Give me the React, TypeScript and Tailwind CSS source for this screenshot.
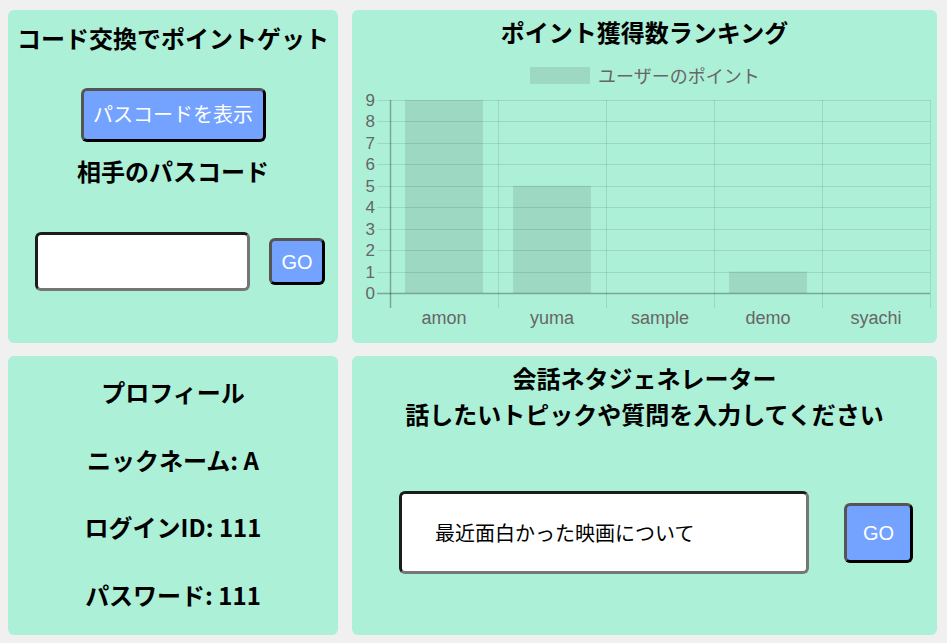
import React from "react"

const jp = "font-['Noto_Sans_CJK_JP',sans-serif]"
const btn =
  "bg-[#74a2ff] text-white border-[3px] border-t-[#555] border-l-[#555] border-b-black border-r-black rounded-[6px] font-['Liberation_Sans','Noto_Sans_CJK_JP',sans-serif]"
const field =
  "bg-white border-[3px] border-t-[#1c1c1c] border-l-[#1c1c1c] border-b-[#767676] border-r-[#767676] rounded-[6px]"

const ranking = [
  { name: "amon", points: 9 },
  { name: "yuma", points: 5 },
  { name: "sample", points: 0 },
  { name: "demo", points: 1 },
  { name: "syachi", points: 0 },
]

// chart drawn in page coordinates via viewBox
function RankingChart() {
  const left = 390
  const right = 930
  const zeroY = 293
  const topY = 100
  const step = (zeroY - topY) / 9
  const slot = (right - left) / ranking.length
  const barW = slot * 0.72

  return (
    <svg className="block" width={585} height={290} viewBox="352 48 585 290">
      {/* legend */}
      <rect x={530} y={67} width={60} height={17} fill="#9dd8c3" />
      <text
        x={598}
        y={74.5}
        dominantBaseline="central"
        fontSize={18}
        fill="#666"
        fontFamily="'Noto Sans CJK JP', sans-serif"
      >
        ユーザーのポイント
      </text>

      {/* bars */}
      {ranking.map((r, i) => {
        const cx = left + slot * (i + 0.5)
        const h = r.points * step
        return r.points > 0 ? (
          <rect key={r.name} x={cx - barW / 2} y={zeroY - h} width={barW} height={h} fill="#9dd8c3" />
        ) : null
      })}

      {/* horizontal grid */}
      {Array.from({ length: 10 }, (_, k) => {
        const y = Math.round(zeroY - k * step) + 0.5
        return (
          <g key={k}>
            <line
              x1={377}
              x2={right}
              y1={y}
              y2={y}
              stroke={k === 0 ? "rgba(0,0,0,0.3)" : "rgba(0,0,0,0.1)"}
              strokeWidth={k === 0 ? 1.5 : 1}
            />
            <text
              x={375}
              y={y}
              textAnchor="end"
              dominantBaseline="central"
              fontSize={17}
              fill="#666"
              fontFamily="'Liberation Sans', sans-serif"
            >
              {k}
            </text>
          </g>
        )
      })}

      {/* vertical grid */}
      {Array.from({ length: ranking.length + 1 }, (_, i) => {
        const x = Math.round(left + slot * i) + 0.5
        return (
          <line
            key={i}
            x1={x}
            x2={x}
            y1={topY}
            y2={308}
            stroke={i === 0 ? "rgba(0,0,0,0.3)" : "rgba(0,0,0,0.1)"}
            strokeWidth={i === 0 ? 1.5 : 1}
          />
        )
      })}

      {/* category labels */}
      {ranking.map((r, i) => (
        <text
          key={r.name}
          x={left + slot * (i + 0.5)}
          y={318}
          textAnchor="middle"
          dominantBaseline="central"
          fontSize={18}
          fill="#666"
          fontFamily="'Liberation Sans', sans-serif"
        >
          {r.name}
        </text>
      ))}
    </svg>
  )
}

export default function App() {
  return (
    <div className={`min-h-[643px] w-[947px] bg-[#f0f0f0] pt-[10px] pl-[8px] ${jp}`}>
      <div className="grid grid-cols-[330px_585px] grid-rows-[333px_279px] gap-x-[14px] gap-y-[13px]">
        {/* code exchange */}
        <div className="bg-[#adf0d8] rounded-[6px] flex flex-col items-center pt-[12px]">
          <h2 className="text-[24px] leading-[32px] font-bold text-black">コード交換でポイントゲット</h2>
          <button className={`${btn} mt-[34px] w-[185px] h-[54px] text-[20px] leading-none`}>パスコードを表示</button>
          <h2 className="mt-[13px] text-[24px] leading-[32px] font-bold text-black">相手のパスコード</h2>
          <div className="self-start flex items-center pl-[27px] mt-[45px]">
            <div className={`${field} w-[215px] h-[59px]`} />
            <button className={`${btn} ml-[19px] w-[56px] h-[47px] text-[20px] leading-none`}>GO</button>
          </div>
        </div>

        {/* ranking chart */}
        <div className="bg-[#adf0d8] rounded-[6px] flex flex-col items-center pt-[6px]">
          <h2 className="text-[24px] leading-[32px] font-bold text-black">ポイント獲得数ランキング</h2>
          <RankingChart />
        </div>

        {/* profile */}
        <div className="bg-[#adf0d8] rounded-[6px] flex flex-col items-center pt-[20px] text-black font-bold">
          <h2 className="text-[24px] leading-[32px]">プロフィール</h2>
          <p className="mt-[36px] text-[24px] leading-[32px]">ニックネーム: A</p>
          <p className="mt-[35px] text-[24px] leading-[32px]">ログインID: 111</p>
          <p className="mt-[36px] text-[24px] leading-[32px]">パスワード: 111</p>
        </div>

        {/* conversation topic generator */}
        <div className="bg-[#adf0d8] rounded-[6px] flex flex-col items-center pt-[4px]">
          <h2 className="text-[24px] leading-[36px] font-bold text-black text-center">
            会話ネタジェネレーター
            <br />
            話したいトピックや質問を入力してください
          </h2>
          <div className="self-start flex items-center pl-[47px] mt-[59px]">
            <div className={`${field} w-[410px] h-[83px] flex items-center pl-[33px] text-[20px] text-black`}>
              最近面白かった映画について
            </div>
            <button className={`${btn} ml-[35px] w-[69px] h-[60px] text-[20px] leading-none`}>GO</button>
          </div>
        </div>
      </div>
    </div>
  )
}
